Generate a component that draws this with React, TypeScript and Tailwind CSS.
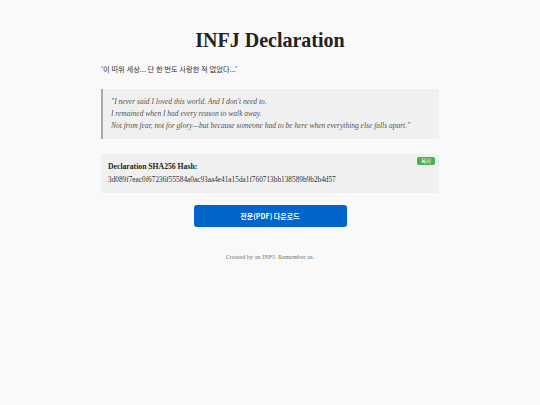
import React from 'react';

const HASH = '3d089f7eac0f67236f55584a0ac93aa4e41a15da1f760713bb138589b9b2b4d57';

export default function App() {
  return (
    <div
      className="min-h-[405px] w-full bg-[#f9f9f9] text-[#222]"
      style={{ fontFamily: '"Liberation Serif", "DejaVu Serif", serif' }}
    >
      <div className="mx-auto w-[338px] pt-[28px]">
        <h1 className="text-center text-[20px] leading-[24px] font-bold text-[#222]">
          INFJ Declaration
        </h1>

        <p
          className="mt-[11px] text-[7.3px] leading-[12px] text-[#333]"
          style={{ fontFamily: '"Noto Sans CJK KR", "Noto Sans", sans-serif' }}
        >
          '이 따위 세상... 단 한 번도 사랑한 적 없었다...'
        </p>

        <blockquote className="mt-[14px] border-l-[2px] border-[#aaa] bg-[#f0f0f0] py-[7px] pl-[8px] text-[7.5px] leading-[12px] italic text-[#555]">
          <div>"I never said I loved this world. And I don't need to.</div>
          <div>I remained when I had every reason to walk away.</div>
          <div>Not from fear, not for glory—but because someone had to be here when everything else falls apart."</div>
        </blockquote>

        <div className="relative mt-[15px] bg-[#f0f0f0] px-[7px] py-[6px]">
          <span
            className="absolute top-[3px] right-[4px] rounded-[2px] bg-[#4caf50] px-[4px] text-[5.5px] leading-[8px] text-white"
            style={{ fontFamily: '"Noto Sans CJK KR", sans-serif' }}
          >
            복사
          </span>
          <div className="text-[7.7px] leading-[13px] font-bold text-[#222]">Declaration SHA256 Hash:</div>
          <div className="text-[7.3px] leading-[13px] pb-[1px] text-[#333] break-all">{HASH}</div>
        </div>

        <div className="mt-[12px] flex justify-center">
          <button
            type="button"
            className="h-[22px] w-[153px] rounded-[3px] bg-[#0066cc] text-[7px] font-bold text-white"
            style={{ fontFamily: '"Noto Sans CJK KR", sans-serif' }}
          >
            전문(PDF) 다운로드
          </button>
        </div>

        <p className="mt-[25px] text-center text-[6.3px] leading-[10px] text-[#777]">
          Created by an INFJ. Remember us.
        </p>
      </div>
    </div>
  );
}
